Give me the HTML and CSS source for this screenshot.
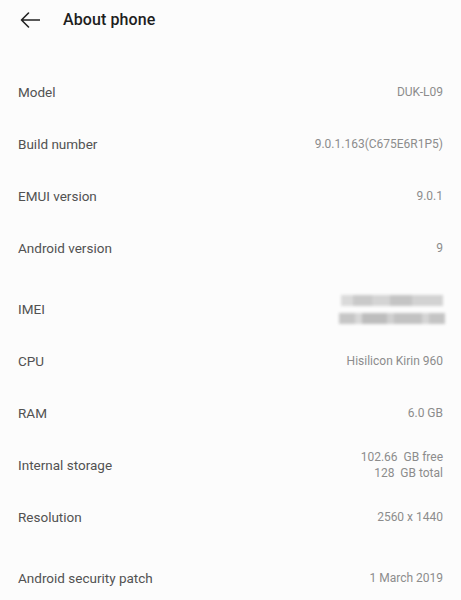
FILE: index.html
```html
<!DOCTYPE html>
<html lang="en">
<head>
<meta charset="utf-8">
<title>About phone</title>
<link rel="stylesheet" href="styles.css">
</head>
<body>
<header class="topbar">
  <svg class="back" width="20" height="16" viewBox="0 0 20 16" aria-hidden="true">
    <path d="M19.5 8H1.5M8.5 1L1.5 8L8.5 15" fill="none" stroke="#222" stroke-width="1.6" stroke-linecap="round" stroke-linejoin="round"/>
  </svg>
  <h1 class="title">About phone</h1>
</header>
<main class="list">
  <div class="row"><span class="label">Model</span><span class="value">DUK-L09</span></div>
  <div class="row"><span class="label">Build number</span><span class="value">9.0.1.163(C675E6R1P5)</span></div>
  <div class="row"><span class="label">EMUI version</span><span class="value">9.0.1</span></div>
  <div class="row"><span class="label">Android version</span><span class="value">9</span></div>
  <div class="row row-gap"><span class="label">IMEI</span>
    <span class="imei"><span class="blur blur-a"></span><span class="blur blur-b"></span></span>
  </div>
  <div class="row"><span class="label">CPU</span><span class="value">Hisilicon Kirin 960</span></div>
  <div class="row"><span class="label">RAM</span><span class="value">6.0 GB</span></div>
  <div class="row"><span class="label">Internal storage</span><span class="value multi">102.66  GB free
128  GB total</span></div>
  <div class="row"><span class="label">Resolution</span><span class="value">2560 x 1440</span></div>
  <div class="row row-gap"><span class="label">Android security patch</span><span class="value">1 March 2019</span></div>
</main>
</body>
</html>
```
FILE: styles.css
```css
html, body {
  margin: 0;
  padding: 0;
  background: #fcfcfc;
  font-family: Roboto, "Noto Sans", sans-serif;
}
.topbar {
  height: 38px;
  display: flex;
  align-items: center;
  padding-left: 20px;
  gap: 23px;
}
.back { display: block; margin-top: 1px; }
.title {
  margin: 0;
  font-size: 16px;
  font-weight: 500;
  color: #1e1e1e;
  letter-spacing: 0.1px;
}
.list {
  padding-top: 28px;
}
.row {
  height: 52px;
  display: flex;
  align-items: center;
  justify-content: space-between;
  padding: 0 18px;
}
.row-gap {
  margin-top: 9px;
}
.label {
  font-size: 13.5px;
  color: #525252;
}
.value {
  font-size: 12px;
  color: #8c8c8c;
  text-align: right;
}
.multi {
  white-space: pre;
  line-height: 16px;
}
.imei {
  display: flex;
  flex-direction: column;
  align-items: flex-end;
  gap: 7px;
  margin-right: -2px;
}
.blur {
  display: block;
  height: 11px;
  filter: blur(1.6px);
}
.blur-a {
  width: 102px;
  margin-right: 2px;
  background: linear-gradient(90deg, #dadada 0 12%, #c9c9c9 12% 30%, #d4d4d4 30% 48%, #c4c4c4 48% 70%, #d2d2d2 70% 100%);
}
.blur-b {
  width: 106px;
  background: linear-gradient(90deg, #c6c6c6 0 15%, #d8d8d8 15% 22%, #bdbdbd 22% 45%, #d0d0d0 45% 52%, #c2c2c2 52% 78%, #d5d5d5 78% 85%, #c4c4c4 85% 100%);
}
```
